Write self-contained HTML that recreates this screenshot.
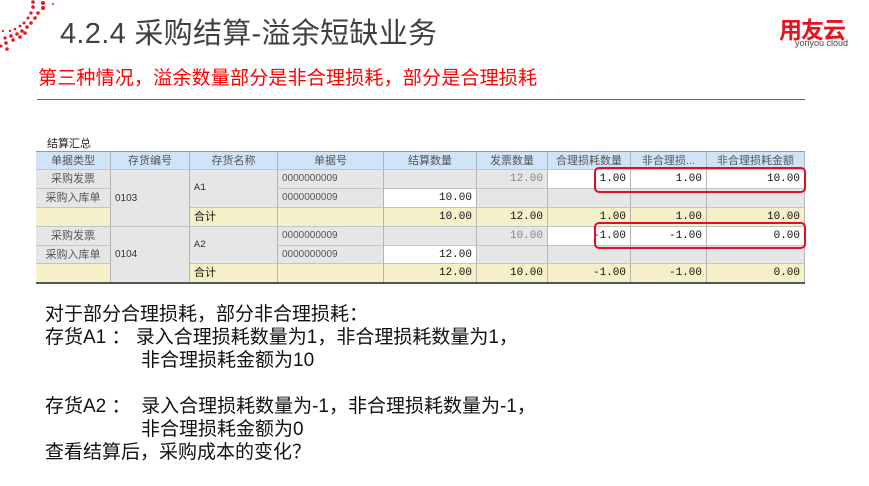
<!DOCTYPE html>
<html><head><meta charset="utf-8"><style>
body{margin:0;width:869px;height:486px;overflow:hidden;background:#fff;font-family:"Liberation Sans","Noto Sans CJK SC",sans-serif;position:relative}
.a{position:absolute}
.c{position:absolute;box-sizing:border-box;border-right:1px solid #b4b4b4;border-bottom:1px solid #c4c4c4;font-size:10px;line-height:18px;color:#333;white-space:nowrap;overflow:hidden;padding:0 4px}
.h{background:#cfe4f8;text-align:center;color:#555;font-size:11px}
.g{background:#e6e6e6}.w{background:#fff}.y{background:#f6f0c9}
.n{font-family:"Liberation Mono",monospace;text-align:right;font-size:11px;color:#111}
.ctr{text-align:center;font-size:11px;color:#555}
.txt{font-size:19px;color:#111;line-height:23px}
</style></head><body>
<svg class="a" style="left:0;top:0" width="60" height="55">
<g fill="#e8141e">
<circle cx="33" cy="2" r="1.8"/><circle cx="33" cy="7" r="1.8"/><circle cx="43" cy="3" r="2"/><circle cx="43" cy="8" r="2"/>
<circle cx="31" cy="13" r="1.6"/><circle cx="38" cy="13" r="1.8"/><circle cx="28" cy="18" r="1.5"/><circle cx="35" cy="18" r="1.8"/>
<circle cx="24" cy="23" r="1.5"/><circle cx="31" cy="23" r="1.8"/><circle cx="20" cy="26" r="1.4"/><circle cx="27" cy="27" r="1.8"/>
<circle cx="15" cy="29" r="1.3"/><circle cx="22" cy="31" r="1.8"/><circle cx="10" cy="31" r="1.2"/><circle cx="17" cy="34" r="1.8"/>
<circle cx="3" cy="31" r="1.1"/><circle cx="11" cy="36" r="1.8"/><circle cx="5" cy="38" r="1.6"/><circle cx="13" cy="40" r="1.8"/>
<circle cx="6" cy="43" r="1.8"/><circle cx="1" cy="46" r="1.5"/><circle cx="7" cy="49" r="1.8"/><circle cx="20" cy="37" r="1.8"/>
<circle cx="25" cy="33" r="1.8"/><circle cx="53" cy="4" r="1"/></g></svg>
<div class="a" style="left:60px;top:10px;font-size:29px;color:#404040;letter-spacing:0.3px">4.2.4 采购结算-溢余短缺业务</div>
<div class="a" style="left:779px;top:11px;font-size:23px;font-weight:bold;color:#e8141e;letter-spacing:-1px">用友云</div>
<div class="a" style="left:795px;top:38px;font-size:9px;color:#444">yonyou cloud</div>
<div class="a" style="left:38px;top:63px;font-size:19px;color:#f00;letter-spacing:0.2px">第三种情况，溢余数量部分是非合理损耗，部分是合理损耗</div>
<div class="a" style="left:37px;top:99px;width:768px;height:1px;background:#666"></div>
<div class="a" style="left:47px;top:135px;font-size:11px;color:#222">结算汇总</div>
<div class="a" style="left:36px;top:151px;width:769px;height:1px;background:#999"></div>

<div class="c h" style="left:36px;top:152px;width:75px;height:18px">单据类型</div>
<div class="c h" style="left:111px;top:152px;width:79px;height:18px">存货编号</div>
<div class="c h" style="left:190px;top:152px;width:88px;height:18px">存货名称</div>
<div class="c h" style="left:278px;top:152px;width:106px;height:18px">单据号</div>
<div class="c h" style="left:384px;top:152px;width:93px;height:18px">结算数量</div>
<div class="c h" style="left:477px;top:152px;width:71px;height:18px">发票数量</div>
<div class="c h" style="left:548px;top:152px;width:83px;height:18px">合理损耗数量</div>
<div class="c h" style="left:631px;top:152px;width:76px;height:18px">非合理损...</div>
<div class="c h" style="left:707px;top:152px;width:98px;height:18px">非合理损耗金额</div>

<div class="c g ctr" style="left:36px;top:170px;width:75px;height:19px">采购发票</div>
<div class="c g ctr" style="left:36px;top:189px;width:75px;height:19px">采购入库单</div>
<div class="c y" style="left:36px;top:208px;width:75px;height:19px"></div>
<div class="c g" style="left:111px;top:170px;width:79px;height:57px;line-height:57px">0103</div>
<div class="c g" style="left:190px;top:170px;width:88px;height:38px;line-height:38px;font-family:'Liberation Mono',monospace">A1</div>
<div class="c y" style="left:190px;top:208px;width:88px;height:19px;font-size:11px;color:#111">合计</div>
<div class="c g" style="left:278px;top:170px;width:106px;height:19px;color:#555">0000000009</div>
<div class="c g" style="left:278px;top:189px;width:106px;height:19px;color:#555">0000000009</div>
<div class="c y" style="left:278px;top:208px;width:106px;height:19px"></div>
<div class="c g n" style="left:384px;top:170px;width:93px;height:19px"></div>
<div class="c w n" style="left:384px;top:189px;width:93px;height:19px">10.00</div>
<div class="c y n" style="left:384px;top:208px;width:93px;height:19px">10.00</div>
<div class="c g n" style="left:477px;top:170px;width:71px;height:19px;color:#888">12.00</div>
<div class="c g n" style="left:477px;top:189px;width:71px;height:19px"></div>
<div class="c y n" style="left:477px;top:208px;width:71px;height:19px">12.00</div>
<div class="c w n" style="left:548px;top:170px;width:83px;height:19px">1.00</div>
<div class="c g n" style="left:548px;top:189px;width:83px;height:19px"></div>
<div class="c y n" style="left:548px;top:208px;width:83px;height:19px">1.00</div>
<div class="c w n" style="left:631px;top:170px;width:76px;height:19px">1.00</div>
<div class="c g n" style="left:631px;top:189px;width:76px;height:19px"></div>
<div class="c y n" style="left:631px;top:208px;width:76px;height:19px">1.00</div>
<div class="c w n" style="left:707px;top:170px;width:98px;height:19px">10.00</div>
<div class="c g n" style="left:707px;top:189px;width:98px;height:19px"></div>
<div class="c y n" style="left:707px;top:208px;width:98px;height:19px">10.00</div>

<div class="c g ctr" style="left:36px;top:227px;width:75px;height:19px">采购发票</div>
<div class="c g ctr" style="left:36px;top:246px;width:75px;height:18px">采购入库单</div>
<div class="c y" style="left:36px;top:264px;width:75px;height:19px"></div>
<div class="c g" style="left:111px;top:227px;width:79px;height:56px;line-height:56px">0104</div>
<div class="c g" style="left:190px;top:227px;width:88px;height:37px;line-height:37px;font-family:'Liberation Mono',monospace">A2</div>
<div class="c y" style="left:190px;top:264px;width:88px;height:19px;font-size:11px;color:#111">合计</div>
<div class="c g" style="left:278px;top:227px;width:106px;height:19px;color:#555">0000000009</div>
<div class="c g" style="left:278px;top:246px;width:106px;height:18px;color:#555">0000000009</div>
<div class="c y" style="left:278px;top:264px;width:106px;height:19px"></div>
<div class="c g n" style="left:384px;top:227px;width:93px;height:19px"></div>
<div class="c w n" style="left:384px;top:246px;width:93px;height:18px">12.00</div>
<div class="c y n" style="left:384px;top:264px;width:93px;height:19px">12.00</div>
<div class="c g n" style="left:477px;top:227px;width:71px;height:19px;color:#888">10.00</div>
<div class="c g n" style="left:477px;top:246px;width:71px;height:18px"></div>
<div class="c y n" style="left:477px;top:264px;width:71px;height:19px">10.00</div>
<div class="c w n" style="left:548px;top:227px;width:83px;height:19px">-1.00</div>
<div class="c g n" style="left:548px;top:246px;width:83px;height:18px"></div>
<div class="c y n" style="left:548px;top:264px;width:83px;height:19px">-1.00</div>
<div class="c w n" style="left:631px;top:227px;width:76px;height:19px">-1.00</div>
<div class="c g n" style="left:631px;top:246px;width:76px;height:18px"></div>
<div class="c y n" style="left:631px;top:264px;width:76px;height:19px">-1.00</div>
<div class="c w n" style="left:707px;top:227px;width:98px;height:19px">0.00</div>
<div class="c g n" style="left:707px;top:246px;width:98px;height:18px"></div>
<div class="c y n" style="left:707px;top:264px;width:98px;height:19px">0.00</div>
<div class="a" style="left:36px;top:282px;width:769px;height:2px;background:#555"></div>

<div class="a" style="left:594px;top:167px;width:212px;height:26px;box-sizing:border-box;border:2px solid #e0101e;border-radius:5px"></div>
<div class="a" style="left:594px;top:222px;width:212px;height:27px;box-sizing:border-box;border:2px solid #e0101e;border-radius:5px"></div>

<div class="a txt" style="left:45px;top:303px">对于部分合理损耗，部分非合理损耗：</div>
<div class="a txt" style="left:45px;top:326px">存货A1 ：&nbsp;录入合理损耗数量为1，非合理损耗数量为1，</div>
<div class="a txt" style="left:141px;top:349px">非合理损耗金额为10</div>
<div class="a txt" style="left:45px;top:395px">存货A2 ：&nbsp;&nbsp;录入合理损耗数量为-1，非合理损耗数量为-1，</div>
<div class="a txt" style="left:141px;top:418px">非合理损耗金额为0</div>
<div class="a txt" style="left:45px;top:441px">查看结算后，采购成本的变化？</div>
</body></html>
